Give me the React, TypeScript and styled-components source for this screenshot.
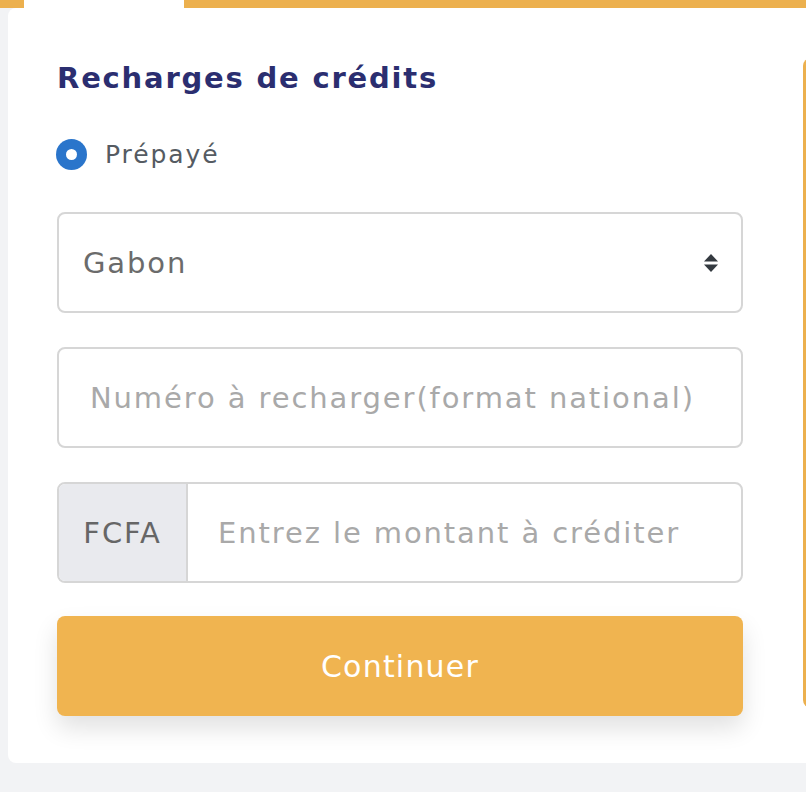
import React from 'react';
import styled, { createGlobalStyle } from 'styled-components';

const GlobalStyle = createGlobalStyle`
    html, body {
        margin: 0;
        padding: 0;
        background: #f2f3f5;
        font-family: "DejaVu Sans", "Open Sans", sans-serif;
    }
    * { box-sizing: border-box; }
`;

const Page = styled.div`
    width: 806px;
    height: 792px;
    overflow: hidden;
    background: #f2f3f5;
`;

const TabStrip = styled.div`
    display: flex;
    height: 8px;
`;

const StripPart = styled.div<{ $active?: boolean; $width?: number }>`
    background: ${p => (p.$active ? '#ffffff' : '#ecb04e')};
    width: ${p => (p.$width ? `${p.$width}px` : 'auto')};
    flex: ${p => (p.$width ? 'none' : '1')};
`;

const Card = styled.div`
    display: flex;
    margin-left: 8px;
    width: 820px;
    height: 755px;
    background: #ffffff;
    border-radius: 8px 0 0 8px;
    padding: 52px 0 0 49px;
`;

const Form = styled.form`
    width: 686px;
    flex: none;
    display: flex;
    flex-direction: column;
`;

const Title = styled.h4`
    margin: 0;
    font-size: 29px;
    line-height: 36px;
    font-weight: 700;
    letter-spacing: 1.8px;
    color: #2b2e70;
`;

const RadioRow = styled.label`
    display: flex;
    align-items: center;
    gap: 18px;
    margin-top: 42px;
    height: 32px;
    font-size: 25px;
    letter-spacing: 1.9px;
    color: #555b62;
`;

const RadioDot = styled.span`
    width: 31px;
    height: 31px;
    border-radius: 50%;
    background: #2a75cb;
    display: flex;
    align-items: center;
    justify-content: center;
    margin-left: -1px;

    &::after {
        content: '';
        width: 11px;
        height: 11px;
        border-radius: 50%;
        background: #ffffff;
    }
`;

const Field = styled.div<{ $top: number }>`
    display: flex;
    align-items: stretch;
    height: 101px;
    margin-top: ${p => p.$top}px;
    border: 2px solid #d6d6d6;
    border-radius: 8px;
    overflow: hidden;
    font-size: 29px;
    letter-spacing: 1.9px;
`;

const SelectValue = styled.div`
    flex: 1;
    display: flex;
    align-items: center;
    justify-content: space-between;
    padding: 0 22px 0 24px;
    color: #6b6b6b;
`;

const Placeholder = styled.div<{ $pad: number }>`
    flex: 1;
    display: flex;
    align-items: center;
    padding-left: ${p => p.$pad}px;
    color: #a9a9a9;
    white-space: nowrap;
`;

const Addon = styled.div`
    width: 129px;
    flex: none;
    display: flex;
    align-items: center;
    justify-content: center;
    background: #e9eaee;
    border-right: 2px solid #d6d6d6;
    color: #666666;
`;

const Button = styled.button`
    margin-top: 33px;
    height: 100px;
    border: none;
    border-radius: 8px;
    background: #f0b450;
    color: #ffffff;
    font-family: inherit;
    font-size: 30px;
    letter-spacing: 1.2px;
    box-shadow: 0 12px 24px rgba(0, 0, 0, 0.12);
`;

const SidePanel = styled.div`
    margin: -2px 0 0 60px;
    width: 100px;
    height: 650px;
    border-left: 3px solid #ecb04e;
    border-radius: 8px;
`;

function SortArrows() {
    return (
        <svg width="16" height="18" viewBox="0 0 16 18">
            <path d="M8 0 L15 7.5 H1 Z" fill="#343a40" />
            <path d="M8 18 L15 10.5 H1 Z" fill="#343a40" />
        </svg>
    );
}

export default function App() {
    return (
        <Page>
            <GlobalStyle />
            <TabStrip>
                <StripPart $width={24} />
                <StripPart $active $width={160} />
                <StripPart />
            </TabStrip>
            <Card>
                <Form>
                    <Title>Recharges de crédits</Title>
                    <RadioRow>
                        <RadioDot />
                        Prépayé
                    </RadioRow>
                    <Field $top={42}>
                        <SelectValue>
                            Gabon
                            <SortArrows />
                        </SelectValue>
                    </Field>
                    <Field $top={34}>
                        <Placeholder $pad={31}>Numéro à recharger(format national)</Placeholder>
                    </Field>
                    <Field $top={34}>
                        <Addon>FCFA</Addon>
                        <Placeholder $pad={30}>Entrez le montant à créditer</Placeholder>
                    </Field>
                    <Button type="button">Continuer</Button>
                </Form>
                <SidePanel />
            </Card>
        </Page>
    );
}
